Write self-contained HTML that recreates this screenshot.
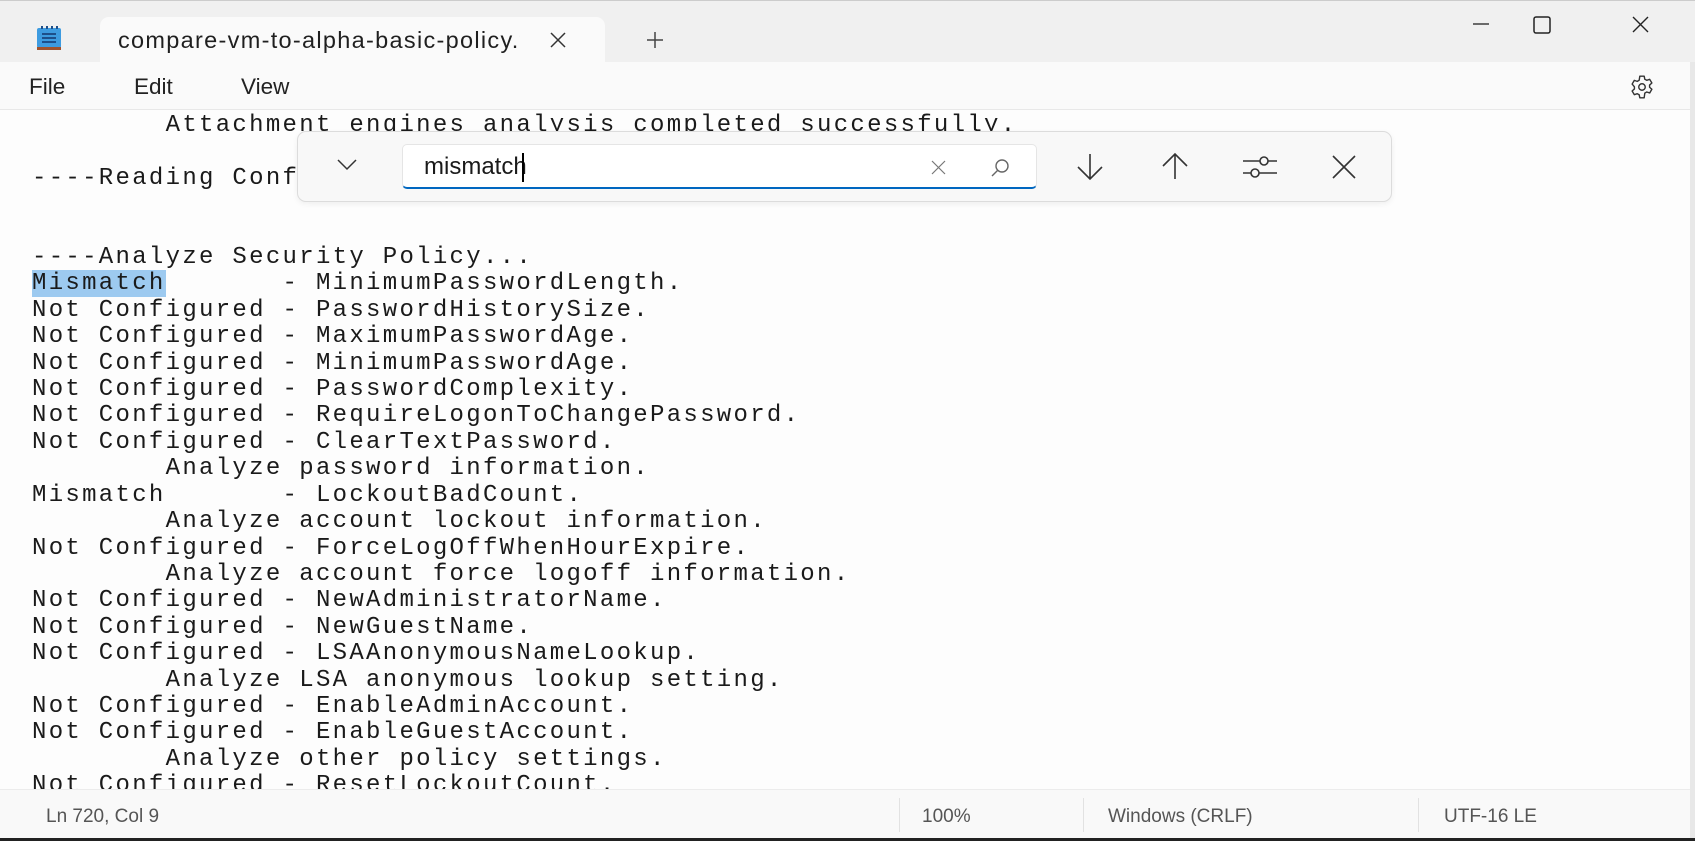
<!DOCTYPE html>
<html><head><meta charset="utf-8"><style>
*{margin:0;padding:0;box-sizing:border-box}
body{width:1695px;height:841px;overflow:hidden;background:#fcfcfc;font-family:"Liberation Sans",sans-serif;position:relative;color:#1a1a1a}
.title{position:absolute;left:0;top:0;width:1695px;height:62px;background:#f0f0f0;border-top:1px solid #ccc}
.tab{position:absolute;left:100px;top:16px;width:505px;height:47px;background:#fafafa;border-radius:9px 9px 0 0}
.tabtext{position:absolute;left:18px;top:10px;width:402px;overflow:hidden;white-space:nowrap;font-size:23.5px;letter-spacing:1.3px;color:#1f1f1f}
.menu{position:absolute;left:0;top:62px;width:1695px;height:48px;background:#fafafa;border-bottom:1px solid #e8e8e8}
.menu span{position:absolute;top:12px;font-size:22.5px;color:#222}
.editor{position:absolute;left:0;top:110px;width:1690px;height:679px;background:#fdfdfd;overflow:hidden}
pre{position:absolute;left:32px;top:3px;font-family:"Liberation Mono",monospace;font-size:24px;letter-spacing:2.3px;line-height:26.4px;color:#1a1a1a}
.hl{background:#9dcaf0}
.find{position:absolute;left:297px;top:131px;width:1095px;height:71px;background:#f8f8f8;border:1px solid #dcdcdc;border-radius:9px;box-shadow:0 2px 6px rgba(0,0,0,.06)}
.input{position:absolute;left:104px;top:12px;width:635px;height:45px;background:#fff;border:1px solid #e5e5e5;border-bottom:2px solid #0067c0;border-radius:5px}
.input span{position:absolute;left:21px;top:8px;font-size:24px;color:#1a1a1a}
.status{position:absolute;left:0;top:789px;width:1690px;height:50px;background:#f9f9f9;border-top:1px solid #ececec;font-size:19px;color:#555}
.status span{position:absolute;top:16px}
.div{position:absolute;top:8px;width:1px;height:34px;background:#e2e2e2}
svg{position:absolute}
</style></head><body>
<div class="title">
 <svg style="left:35px;top:25px" width="28" height="26" viewBox="0 0 28 26"><rect x="2" y="2" width="24" height="20" rx="2" fill="#3d9be0"/><rect x="2" y="21" width="24" height="3" fill="#a0522d"/><g stroke="#1d4f8a" stroke-width="2"><line x1="7" y1="8" x2="21" y2="8"/><line x1="7" y1="12" x2="21" y2="12"/><line x1="7" y1="16" x2="21" y2="16"/></g><g fill="#1d4f8a"><rect x="6" y="0" width="2" height="3"/><rect x="11" y="0" width="2" height="3"/><rect x="16" y="0" width="2" height="3"/><rect x="21" y="0" width="2" height="3"/></g></svg>
 <div class="tab"><div class="tabtext">compare-vm-to-alpha-basic-policy.txt</div>
  <svg style="left:450px;top:15px" width="16" height="16" viewBox="0 0 16 16"><path d="M1 1L15 15M15 1L1 15" stroke="#333" stroke-width="1.5"/></svg></div>
 <svg style="left:646px;top:30px" width="18" height="18" viewBox="0 0 18 18"><path d="M9 1V17M1 9H17" stroke="#444" stroke-width="1.5"/></svg>
 <svg style="left:1473px;top:22px" width="16" height="2" viewBox="0 0 16 2"><path d="M0 1H16" stroke="#222" stroke-width="1.3"/></svg>
 <svg style="left:1533px;top:15px" width="18" height="18" viewBox="0 0 18 18"><rect x="1" y="1" width="16" height="16" rx="2" fill="none" stroke="#222" stroke-width="1.5"/></svg>
 <svg style="left:1632px;top:15px" width="17" height="17" viewBox="0 0 17 17"><path d="M1 1L16 16M16 1L1 16" stroke="#222" stroke-width="1.4"/></svg>
</div>
<div class="menu"><span style="left:29px">File</span><span style="left:134px">Edit</span><span style="left:241px">View</span>
 <svg style="left:1629px;top:12px" width="26" height="26" viewBox="0 0 24 24"><path d="M10 2h4l.6 2.8 1.8 1 2.7-.9 2 3.4-2.1 1.9v2l2.1 1.9-2 3.4-2.7-.9-1.8 1L14 22h-4l-.6-2.8-1.8-1-2.7.9-2-3.4 2.1-1.9v-2L2.9 9.3l2-3.4 2.7.9 1.8-1z" fill="none" stroke="#333" stroke-width="1.3" stroke-linejoin="round"/><circle cx="12" cy="12" r="3" fill="none" stroke="#333" stroke-width="1.3"/></svg>
</div>
<div class="editor"><pre>        Attachment engines analysis completed successfully.

----Reading Configuration Template...


----Analyze Security Policy...
<span class="hl">Mismatch</span>       - MinimumPasswordLength.
Not Configured - PasswordHistorySize.
Not Configured - MaximumPasswordAge.
Not Configured - MinimumPasswordAge.
Not Configured - PasswordComplexity.
Not Configured - RequireLogonToChangePassword.
Not Configured - ClearTextPassword.
        Analyze password information.
Mismatch       - LockoutBadCount.
        Analyze account lockout information.
Not Configured - ForceLogOffWhenHourExpire.
        Analyze account force logoff information.
Not Configured - NewAdministratorName.
Not Configured - NewGuestName.
Not Configured - LSAAnonymousNameLookup.
        Analyze LSA anonymous lookup setting.
Not Configured - EnableAdminAccount.
Not Configured - EnableGuestAccount.
        Analyze other policy settings.
Not Configured - ResetLockoutCount.</pre></div>
<div class="find">
 <svg style="left:39px;top:27px" width="20" height="12" viewBox="0 0 20 12"><path d="M1 1L10 10L19 1" fill="none" stroke="#333" stroke-width="1.5"/></svg>
 <div class="input"><span>mismatch</span><div style="position:absolute;left:119px;top:8px;width:1.5px;height:29px;background:#000"></div>
  <svg style="left:528px;top:15px" width="15" height="15" viewBox="0 0 15 15"><path d="M1 1L14 14M14 1L1 14" stroke="#777" stroke-width="1.2"/></svg>
  <svg style="left:587px;top:13px" width="20" height="20" viewBox="0 0 20 20"><circle cx="12" cy="8" r="6" fill="none" stroke="#666" stroke-width="1.4"/><path d="M7.5 12.5L2 18" stroke="#666" stroke-width="1.4"/></svg>
 </div>
 <svg style="left:777px;top:21px" width="30" height="28" viewBox="0 0 30 28"><path d="M15 1V26M3 14L15 26L27 14" fill="none" stroke="#333" stroke-width="1.6"/></svg>
 <svg style="left:862px;top:20px" width="30" height="28" viewBox="0 0 30 28"><path d="M15 27V2M3 14L15 2L27 14" fill="none" stroke="#333" stroke-width="1.6"/></svg>
 <svg style="left:944px;top:22px" width="36" height="26" viewBox="0 0 36 26"><path d="M1 7H35M1 19H35" stroke="#333" stroke-width="1.6"/><circle cx="22" cy="7" r="4" fill="#f8f8f8" stroke="#333" stroke-width="1.6"/><circle cx="13" cy="19" r="4" fill="#f8f8f8" stroke="#333" stroke-width="1.6"/></svg>
 <svg style="left:1034px;top:23px" width="24" height="24" viewBox="0 0 24 24"><path d="M1 1L23 23M23 1L1 23" stroke="#333" stroke-width="1.6"/></svg>
</div>
<div class="status">
 <span style="left:46px">Ln 720, Col 9</span>
 <div class="div" style="left:899px"></div><span style="left:922px">100%</span>
 <div class="div" style="left:1083px"></div><span style="left:1108px">Windows (CRLF)</span>
 <div class="div" style="left:1418px"></div><span style="left:1444px">UTF-16 LE</span>
</div>
<div style="position:absolute;left:1690px;top:62px;width:5px;height:779px;background:#e8e8e8"></div>
<div style="position:absolute;left:0;top:838px;width:1695px;height:3px;background:#222"></div>
</body></html>
